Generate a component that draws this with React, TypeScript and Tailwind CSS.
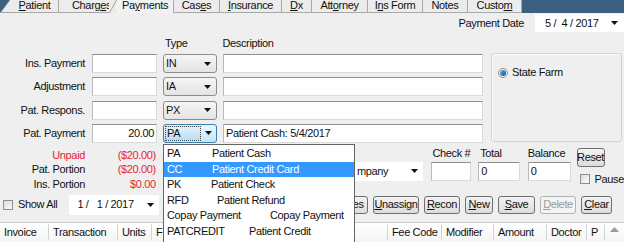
import React from 'react'

const box = 'bg-white border border-[#dadada] border-t-[#8e8e8e] border-l-[#b9b9b9]'

function Ul({ text, i }: { text: string; i: number }) {
  if (i < 0) return <>{text}</>
  return (
    <>
      {text.slice(0, i)}
      <span className="underline underline-offset-[1px]">{text[i]}</span>
      {text.slice(i + 1)}
    </>
  )
}

function Arrow() {
  return (
    <svg width="7" height="4" viewBox="0 0 7 4" className="shrink-0">
      <path d="M0 0h7L3.5 4z" fill="#111" />
    </svg>
  )
}

const TABS = [
  { label: 'Cases', u: 3, w: 'w-[46px]' },
  { label: 'Insurance', u: 0, w: 'w-[62px]' },
  { label: 'Dx', u: 0, w: 'w-[30px]' },
  { label: 'Attorney', u: 3, w: 'w-[56px]' },
  { label: 'Ins Form', u: 1, w: 'w-[55px]' },
  { label: 'Notes', u: -1, w: 'w-[45px]' },
  { label: 'Custom', u: 5, w: 'w-[54px]' },
]

const ROWS = [
  { label: 'Ins. Payment', type: 'IN' },
  { label: 'Adjustment', type: 'IA' },
  { label: 'Pat. Respons.', type: 'PX' },
]

const OPTIONS = [
  { code: 'PA', desc: 'Patient Cash', w: 'w-[45px]' },
  { code: 'CC', desc: 'Patient Credit Card', w: 'w-[45px]' },
  { code: 'PK', desc: 'Patient Check', w: 'w-[44px]' },
  { code: 'RFD', desc: 'Patient Refund', w: 'w-[50px]' },
  { code: 'Copay Payment', desc: 'Copay Payment', w: 'w-[103px]' },
  { code: 'PATCREDIT', desc: 'Patient Credit', w: 'w-[82px]' },
]

const BUTTONS = [
  { label: 'Charges', u: 0, w: 'w-[48px]' },
  { label: 'Unassign', u: 0, w: 'w-[46px]' },
  { label: 'Recon', u: 0, w: 'w-[36px]' },
  { label: 'New', u: 0, w: 'w-[28px]' },
  { label: 'Save', u: 0, w: 'w-[37px]' },
  { label: 'Delete', u: 0, w: 'w-[36px]', off: true },
  { label: 'Clear', u: 0, w: 'w-[31px]' },
]

// the column under the open list only shows its first letter
const COLS = [
  { label: 'Invoice', w: 'w-[49px]' },
  { label: 'Transaction', w: 'w-[69px]' },
  { label: 'Units', w: 'w-[34px]' },
  { label: 'F', w: 'w-[236px]' },
  { label: 'Fee Code', w: 'w-[54px]' },
  { label: 'Modifier', w: 'w-[52px]' },
  { label: 'Amount', w: 'w-[53px]' },
  { label: 'Doctor', w: 'w-[40px]' },
  { label: 'P', w: 'w-[18px]' },
]

function Check() {
  return <div className="w-[10px] h-[10px] border border-[#8f8f8f] bg-gradient-to-br from-[#dcdcdc] to-[#fbfbfb] shrink-0" />
}

export default function App() {
  return (
    <div className="relative w-[624px] h-[242px] overflow-hidden bg-[#efefef] text-[11px] leading-[13px] tracking-[-0.35px] text-[#111] font-['Liberation_Sans',Arial,sans-serif]">
      {/* Tab strip */}
      <div className="flex h-[13px] bg-[#3d5f82]">
        <svg width="11" height="13" viewBox="0 0 11 13" className="shrink-0">
          <rect width="11" height="13" fill="#ececec" />
          <path d="M0 0H10L1 12H0z" fill="#3d5f82" />
          <path d="M10 0L1 12" stroke="#9aa3ad" strokeWidth="1" />
          <path d="M0 12.5H11" stroke="#a0a0a0" />
        </svg>
        <div className="w-[48px] h-[13px] bg-[#ececec] border-b border-r border-[#a8a8a8] flex items-start justify-center">
          <span className="leading-[11px]"><Ul text="Patient" i={0} /></span>
        </div>
        <div className="w-[50px] h-[13px] bg-[#ececec] border-b border-[#a8a8a8] flex items-start pl-[13px]">
          <span className="leading-[11px]"><Ul text="Charges" i={5} /></span>
        </div>
        <svg width="8" height="13" viewBox="0 0 8 13" className="shrink-0">
          <rect width="8" height="13" fill="#ececec" />
          <path d="M0 12.5H1" stroke="#a8a8a8" />
          <path d="M0.5 13L7.5 0" stroke="#a0a0a0" />
        </svg>
        <div className="w-[57px] h-[13px] bg-[#f2f2f2] border-r border-[#a8a8a8] flex items-start justify-center">
          <span className="leading-[11px]"><Ul text="Payments" i={2} /></span>
        </div>
        {TABS.map(t => (
          <div key={t.label} className={`${t.w} h-[13px] bg-[#ececec] border-b border-r border-[#a8a8a8] flex items-start justify-center`}>
            <span className="leading-[11px]"><Ul text={t.label} i={t.u} /></span>
          </div>
        ))}
      </div>

      {/* Payment date */}
      <div className="flex items-center justify-end h-[18px] mt-[1px]">
        <span>Payment Date</span>
        <div className="ml-[11px] w-[89px] h-[18px] bg-white flex items-center pl-[10px] pr-[6px]">
          <span className="whitespace-pre flex-1">{'5 /  4 / 2017'}</span>
          <Arrow />
        </div>
      </div>

      {/* Column headers */}
      <div className="flex h-[12px] mt-[5px] items-center">
        <span className="ml-[165px]">Type</span>
        <span className="ml-[35px]">Description</span>
      </div>

      {/* Entry rows + insurer panel */}
      <div className="flex mt-[5px]">
        <div className="flex flex-col gap-[4.3px]">
          {ROWS.map(r => (
            <div key={r.label} className="flex items-center h-[19px]">
              <span className="w-[85px] text-right">{r.label}</span>
              <div className={`ml-[7px] w-[65px] h-[19px] ${box}`} />
              <div className="ml-[6px] w-[54px] h-[19px] rounded-[3px] border border-[#8d8d8d] bg-gradient-to-b from-[#f5f5f5] to-[#e4e4e4] flex items-center justify-between pl-[2px] pr-[5px]">
                <span>{r.type}</span>
                <Arrow />
              </div>
              <div className={`ml-[6px] w-[260px] h-[19px] ${box}`} />
            </div>
          ))}
          <div className="flex items-center h-[19px]">
            <span className="w-[85px] text-right">Pat. Payment</span>
            <div className={`ml-[7px] w-[65px] h-[19px] ${box} flex items-center justify-end pr-[2px]`}>20.00</div>
            <div className="ml-[6px] w-[54px] h-[19px] rounded-[3px] border border-[#3c7fb1] bg-gradient-to-b from-[#eaf6fd] to-[#c4e5f8] flex items-center p-[1px]">
              <div className="w-[36px] h-full border border-dotted border-[#444] bg-gradient-to-b from-[#e4f1fb] to-[#b9dcf4] flex items-center pl-[1px]">PA</div>
              <div className="flex-1 flex justify-center"><Arrow /></div>
            </div>
            <div className={`ml-[6px] w-[260px] h-[19px] ${box} flex items-center pl-[2px]`}>Patient Cash: 5/4/2017</div>
          </div>
        </div>
        <div className="ml-[8px] mt-[-1px] w-[131px] h-[89px] rounded-[3px] border border-[#d3d3d3] shadow-[inset_1px_1px_0_#fff] pl-[6px] pt-[12px]">
          <div className="flex items-center gap-[4px]">
            <div className="w-[10px] h-[10px] rounded-full border border-[#8a8a8a] bg-[#f4f4f4] flex items-center justify-center">
              <div className="w-[6px] h-[6px] rounded-full bg-gradient-to-br from-[#5fb1ec] to-[#0b4f8f]" />
            </div>
            <span>State Farm</span>
          </div>
        </div>
      </div>

      {/* Totals + check */}
      <div className="flex items-start h-[50px]">
        <div className="w-[157px] pt-[5px] flex flex-col">
          <div className="flex h-[14.5px] items-center text-[#e8262c]">
            <span className="w-[85px] text-right">Unpaid</span>
            <span className="flex-1 text-right">($20.00)</span>
          </div>
          <div className="flex h-[14.5px] items-center">
            <span className="w-[85px] text-right">Pat. Portion</span>
            <span className="flex-1 text-right text-[#e8262c]">($20.00)</span>
          </div>
          <div className="flex h-[14.5px] items-center">
            <span className="w-[85px] text-right">Ins. Portion</span>
            <span className="flex-1 text-right text-[#e8262c]">$0.00</span>
          </div>
        </div>
        <div className="ml-[198px] mt-[19px] w-[70px] h-[19px] bg-white flex items-center pl-[3px] pr-[5px] justify-between">
          <span>mpany</span>
          <Arrow />
        </div>
        <div className="ml-[8px] w-[40px] pt-[4px] flex flex-col">
          <span className="h-[13px] ml-[1px]">Check #</span>
          <div className={`mt-[2px] h-[19px] ${box}`} />
        </div>
        <div className="ml-[7px] w-[42px] pt-[4px] flex flex-col">
          <span className="h-[13px] ml-[2px]">Total</span>
          <div className={`mt-[2px] h-[19px] ${box} pl-[2px] flex items-center`}>0</div>
        </div>
        <div className="ml-[8px] w-[43px] pt-[4px] flex flex-col">
          <span className="h-[13px]">Balance</span>
          <div className={`mt-[2px] h-[19px] ${box} pl-[2px] flex items-center`}>0</div>
        </div>
        <div className="ml-[6px] pt-[5px] flex flex-col">
          <div className="w-[28px] h-[19px] rounded-[3px] border border-[#707070] bg-gradient-to-b from-[#f3f3f3] to-[#dcdcdc] flex items-center justify-center">Reset</div>
          <div className="flex items-center mt-[6px] ml-[3px] gap-[5px]">
            <Check />
            <span>Pause</span>
          </div>
        </div>
      </div>

      {/* Filter + buttons */}
      <div className="flex items-center h-[20px] mt-[2px]">
        <div className="ml-[3px]"><Check /></div>
        <span className="ml-[5px]">Show All</span>
        <div className="ml-[12px] w-[90px] h-[20px] bg-white flex items-center pl-[8px] pr-[5px]">
          <span className="whitespace-pre flex-1">{'1 /   1 / 2017'}</span>
          <Arrow />
        </div>
        <div className="ml-auto mr-[12px] flex gap-[5px]">
          {BUTTONS.map(b => (
            <div
              key={b.label}
              className={`${b.w} h-[18px] rounded-[3px] border flex items-center justify-center ${
                b.off ? 'border-[#adb2b5] bg-[#f4f4f4] text-[#9a9a9a]' : 'border-[#707070] bg-gradient-to-b from-[#f3f3f3] to-[#dcdcdc]'
              }`}
            >
              <span><Ul text={b.label} i={b.u} /></span>
            </div>
          ))}
        </div>
      </div>

      {/* Table header */}
      <div className="mt-[7px] h-[20px] border-t border-[#c9c9c9] bg-gradient-to-b from-white to-[#f4f4f4] flex items-center">
        {COLS.map(c => (
          <div key={c.label} className={`${c.w} h-[16px] border-r border-[#d5d5d5] flex items-center pl-[4px] overflow-hidden whitespace-nowrap`}>
            {c.label}
          </div>
        ))}
        <div className="flex-1 flex justify-center items-start h-[18px] pt-[4px]">
          <svg width="9" height="5" viewBox="0 0 9 5"><path d="M0 5L4.5 0L9 5z" fill="#9a9a9a" /></svg>
        </div>
      </div>

      {/* Open type dropdown */}
      <div className="absolute left-[163px] top-[144px] w-[192px] h-[110px] bg-white border border-[#646464] pt-[1px]">
        {OPTIONS.map((o, i) => (
          <div key={o.code} className={`flex items-center h-[15.5px] pl-[3px] whitespace-nowrap ${i === 1 ? 'bg-[#3399ff] text-white' : ''}`}>
            <span className={`${o.w} shrink-0`}>{o.code}</span>
            <span>{o.desc}</span>
          </div>
        ))}
      </div>
    </div>
  )
}
